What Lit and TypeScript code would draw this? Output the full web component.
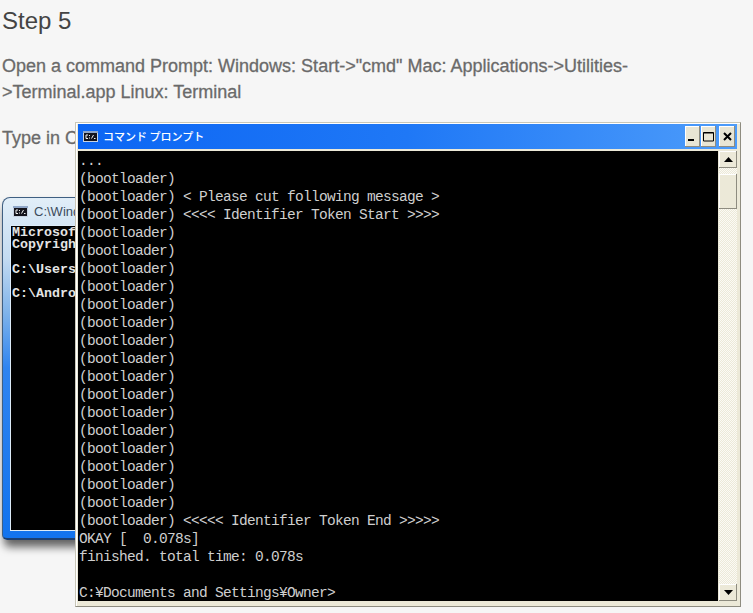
import { LitElement, html, css, svg } from "lit";
import { customElement } from "lit/decorators.js";

const LINES = [
  "...",
  "(bootloader)",
  "(bootloader) < Please cut following message >",
  "(bootloader) <<<< Identifier Token Start >>>>",
  ...Array(16).fill("(bootloader)"),
  "(bootloader) <<<<< Identifier Token End >>>>>",
  "OKAY [  0.078s]",
  "finished. total time: 0.078s",
  "",
  "C:¥Documents and Settings¥Owner>",
];

const cmdIcon = () => svg`<svg width="15" height="11" viewBox="0 0 15 11">
  <rect x="0" y="0" width="15" height="11" fill="#c9d3e2"/>
  <rect x="0" y="0" width="15" height="2" fill="#8fa6c8"/>
  <rect x="1" y="2" width="13" height="8" fill="#14141c"/>
  <path d="M5 4H3v3.5h2M6.5 4v1M6.5 6.5v1M8.5 7.5l2-3.5M11 7.5h1.5" stroke="#f2f2f2" stroke-width="1" fill="none"/>
</svg>`;

@customElement("app-root")
export class AppRoot extends LitElement {
  static styles = css`
    :host {
      display: block;
      width: 753px;
      height: 613px;
      position: relative;
      overflow: hidden;
      background: #f6f6f6;
      font-family: "Liberation Sans", Arial, sans-serif;
    }
    .article { padding: 8px 0 0 2px; width: 640px; color: #6a6a6a; }
    h1 { margin: 0; font-size: 24px; line-height: 25px; font-weight: 400; color: #444; }
    p { margin: 0; font-size: 18px; line-height: 26px; -webkit-text-stroke: 0.3px #6a6a6a; }
    .open { margin-top: 20px; }
    .type { margin-top: 20px; }

    .back {
      position: absolute;
      left: 2px;
      top: 197px;
      width: 200px;
      height: 343px;
      box-sizing: border-box;
      background: linear-gradient(#e2eef8 0, #c4dbf1 60px, #7fb3ea 115px, #2f84f0 170px, #1273ee 100%);
      border: 1px solid #3f5f82;
      border-bottom: 2px solid #1c3f70;
      border-radius: 8px 8px 5px 5px;
      box-shadow: 2px 7px 8px rgba(0, 0, 0, 0.6);
      padding: 0 6px 7px 7px;
      display: flex;
      flex-direction: column;
    }
    .back-title {
      height: 27px;
      flex: none;
      display: flex;
      align-items: center;
      gap: 6px;
      padding-left: 3px;
      font-size: 13px;
      color: #3b4a5c;
    }
    .back-body {
      flex: 1;
      background: #000;
      border: 1px solid #dcebf8;
      color: #e4e4e4;
      font: 700 13.33px/12px "Liberation Mono", "DejaVu Sans Mono", monospace;
      padding: 1px 0 0 1px;
      white-space: pre;
    }
    .gap { height: 13px; }
    .gap2 { height: 12px; }

    .front {
      position: absolute;
      left: 75px;
      top: 122px;
      width: 666px;
      height: 485px;
      box-sizing: border-box;
      background: #ece9d8;
      border: 1px solid #c9c7b8;
      border-right-color: #8e8c80;
      border-bottom-color: #8e8c80;
      box-shadow: inset 1px 1px 0 #fff;
      padding: 1px 3px 5px 2px;
      display: flex;
      flex-direction: column;
    }
    .bar {
      height: 25px;
      flex: none;
      background: linear-gradient(90deg, #0c66f4 0, #1f78f6 50%, #4d9cfa 100%);
      display: flex;
      align-items: center;
      padding: 0 2px 0 5px;
      color: #fff;
    }
    .bar-title {
      font: 500 11px/14px "Noto Sans CJK JP", sans-serif;
      margin-left: 5px;
      margin-top: -2px;
      flex: 1;
    }
    .btn {
      width: 15px;
      height: 21px;
      background: #e8e5d4;
      box-shadow: inset -1px -1px 0 #8e8c80, inset 1px 1px 0 #fff;
      display: flex;
      align-items: center;
      justify-content: center;
      margin-left: 1px;
    }
    .btn.close { margin-left: 3px; width: 16px; }
    .main { flex: 1; display: flex; margin-top: 2px; min-height: 0; }
    .console {
      flex: 1;
      background: #000;
      color: #cfcfcf;
      font: 400 14.5px/18px "Liberation Mono", monospace;
      letter-spacing: -0.7px;
      white-space: pre;
      padding: 1px 0 0 1px;
      overflow: hidden;
    }
    .console div { height: 18px; }
    .scroll {
      width: 18px;
      flex: none;
      margin-left: 1px;
      display: flex;
      flex-direction: column;
      background-color: #f4f3ec;
      background-image: repeating-conic-gradient(#ece9d8 0 25%, #fbfaf5 0 50%);
      background-size: 2px 2px;
    }
    .sbtn, .thumb {
      background: #ece9d8;
      box-shadow: inset -1px -1px 0 #8e8c80, inset 1px 1px 0 #fff;
      flex: none;
    }
    .sbtn { height: 17px; display: flex; align-items: center; justify-content: center; }
    .thumb { height: 35px; margin-top: 6px; }
    .spacer { flex: 1; }
  `;

  render() {
    return html`
      <div class="article">
        <h1>Step 5</h1>
        <p class="open">Open a command Prompt: Windows: Start-&gt;"cmd" Mac: Applications-&gt;Utilities-&gt;Terminal.app Linux: Terminal</p>
        <p class="type">Type in C</p>
      </div>

      <div class="back">
        <div class="back-title">${cmdIcon()}<span>C:\\Wind</span></div>
        <div class="back-body">Microsof
Copyrigh
<div class="gap"></div>C:\\Users
<div class="gap2"></div>C:\\Andro</div>
      </div>

      <div class="front">
        <div class="bar">
          ${cmdIcon()}
          <span class="bar-title">コマンド プロンプト</span>
          <span class="btn"><svg width="11" height="11" viewBox="0 0 11 11"><rect x="1" y="8" width="6" height="2" fill="#000"/></svg></span>
          <span class="btn"><svg width="11" height="11" viewBox="0 0 11 11"><path d="M.5 1.5h10v8.5H.5z M.5 2h10" fill="none" stroke="#000"/></svg></span>
          <span class="btn close"><svg width="11" height="11" viewBox="0 0 11 11"><path d="M2 2l7 7M9 2l-7 7" stroke="#000" stroke-width="2"/></svg></span>
        </div>
        <div class="main">
          <div class="console">${LINES.map((l) => html`<div>${l}</div>`)}</div>
          <div class="scroll">
            <div class="sbtn"><svg width="9" height="5" viewBox="0 0 9 5"><path d="M4.5 0L9 5H0z" fill="#000"/></svg></div>
            <div class="thumb"></div>
            <div class="spacer"></div>
            <div class="sbtn"><svg width="9" height="5" viewBox="0 0 9 5"><path d="M4.5 5L9 0H0z" fill="#000"/></svg></div>
          </div>
        </div>
      </div>
    `;
  }
}
